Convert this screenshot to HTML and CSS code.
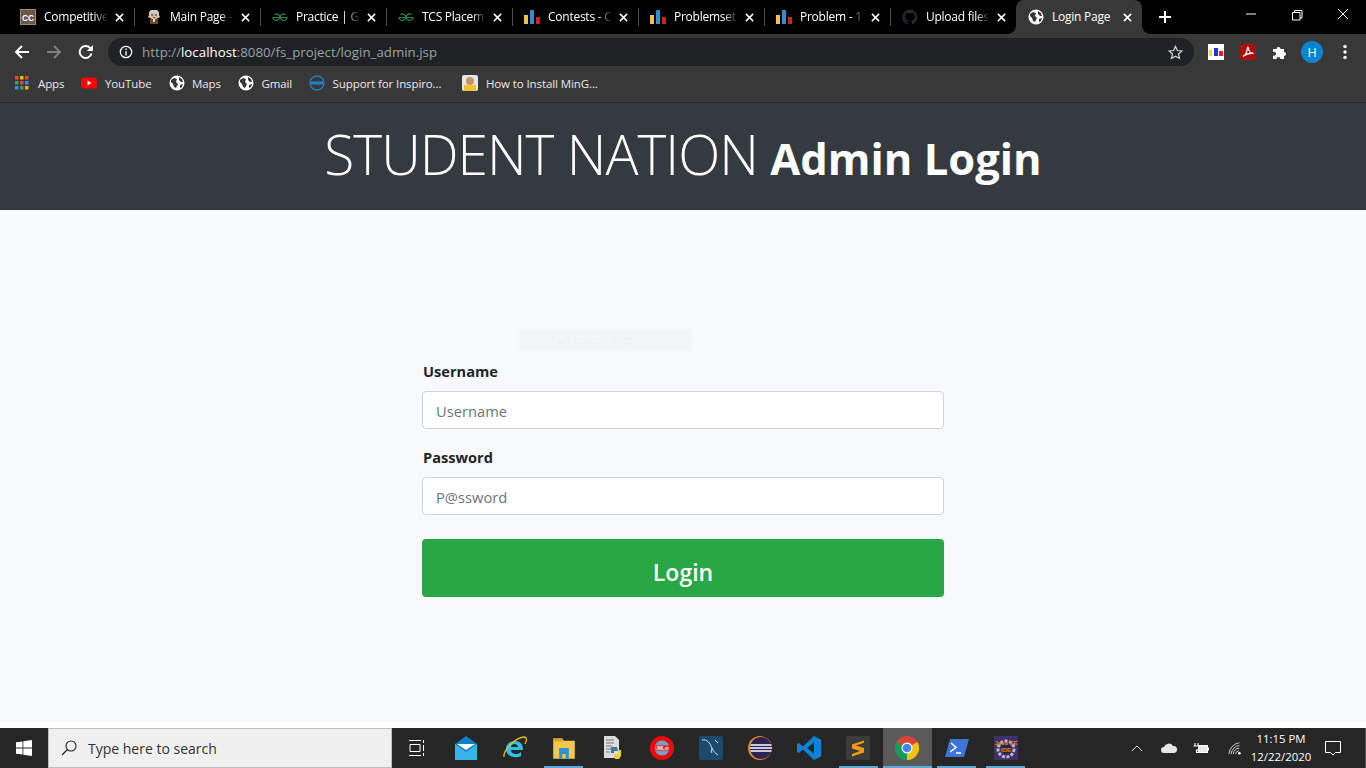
FILE: index.html
```html
<!DOCTYPE html>
<html lang="en">
<head>
<meta charset="utf-8">
<title>Login Page</title>
<link rel="stylesheet" href="styles.css">
</head>
<body>
<svg class="defs" width="0" height="0" aria-hidden="true">
  <defs>
    <symbol id="bars" viewBox="0 0 16 16">
      <rect x="0" y="6" width="4" height="9" fill="#f4c04a"/>
      <rect x="6" y="1" width="4" height="14" fill="#2f8fd0"/>
      <rect x="12" y="8" width="4" height="7" fill="#c8232c"/>
    </symbol>
    <symbol id="gfg" viewBox="0 0 16 16">
      <path d="M8 8.500H15C15 11 12 12 10.500 11C9 10.500 8 9.500 8 8.500C8 6 11 4 13.500 5.500M8 8.500H1C1 11 4 12 5.500 11C7 10.500 8 9.500 8 8.500C8 6 5 4 2.500 5.500" fill="none" stroke="#2a8a45" stroke-width="1.200"/>
    </symbol>
    <symbol id="globe" viewBox="0 0 16 16">
      <circle cx="8" cy="8" r="7.500" fill="#fff"/>
      <path d="M2 5l3-2 3 1-1 3 2 2-2 4-2-1-1-3-2-2zM10 2l3 2 1 3-2 0-2-2zM11 10l3-1-1 3-2 1z" fill="#383838"/>
    </symbol>
    <symbol id="close" viewBox="0 0 10 10">
      <path d="M1 1l8 8M9 1l-8 8" stroke="#fff" stroke-width="1.700" fill="none"/>
    </symbol>
  </defs>
</svg>

<div class="tabstrip">
  <div class="tab sep">
    <svg class="fav" viewBox="0 0 16 16"><rect width="16" height="16" fill="#6b5648"/><rect x=".5" y=".5" width="15" height="15" fill="none" stroke="#9a8a7e"/><text x="8" y="11.500" class="cc">CC</text></svg>
    <span class="tab-title">Competitive</span>
    <svg class="tab-x"><use href="#close"/></svg>
  </div>
  <div class="tab sep">
    <svg class="fav" viewBox="0 0 16 16"><path d="M3 6V3l2-2h6l2 2v3l1 2-2 1H4L2 8z" fill="#c9c9c9"/><rect x="5" y="4" width="6" height="6" fill="#e0b491"/><path d="M5 6h2M9 6h2" stroke="#333"/><rect x="7" y="8" width="2" height="1" fill="#7a4a30"/><rect x="4" y="10" width="8" height="5" fill="#6b4a2c"/><rect x="7" y="10" width="2" height="3" fill="#e9d9b0"/></svg>
    <span class="tab-title">Main Page -</span>
    <svg class="tab-x"><use href="#close"/></svg>
  </div>
  <div class="tab sep">
    <svg class="fav"><use href="#gfg"/></svg>
    <span class="tab-title">Practice | G</span>
    <svg class="tab-x"><use href="#close"/></svg>
  </div>
  <div class="tab sep">
    <svg class="fav"><use href="#gfg"/></svg>
    <span class="tab-title">TCS Placem</span>
    <svg class="tab-x"><use href="#close"/></svg>
  </div>
  <div class="tab sep">
    <svg class="fav"><use href="#bars"/></svg>
    <span class="tab-title">Contests - C</span>
    <svg class="tab-x"><use href="#close"/></svg>
  </div>
  <div class="tab sep">
    <svg class="fav"><use href="#bars"/></svg>
    <span class="tab-title">Problemset</span>
    <svg class="tab-x"><use href="#close"/></svg>
  </div>
  <div class="tab sep">
    <svg class="fav"><use href="#bars"/></svg>
    <span class="tab-title">Problem - 1</span>
    <svg class="tab-x"><use href="#close"/></svg>
  </div>
  <div class="tab">
    <svg class="fav" viewBox="0 0 16 16"><path d="M8 .5a7.700 7.700 0 0 0-2.400 15c.4.1.5-.2.5-.4v-1.400c-2.100.5-2.600-1-2.600-1-.3-.9-.8-1.100-.8-1.100-.7-.5 0-.5 0-.5.800.1 1.200.8 1.200.8.700 1.200 1.800.9 2.200.7.100-.5.300-.9.500-1.100-1.700-.2-3.500-.9-3.500-3.800 0-.8.300-1.500.8-2-.1-.2-.3-1 .1-2 0 0 .6-.2 2.100.8a7 7 0 0 1 3.800 0c1.500-1 2.100-.8 2.100-.8.400 1 .2 1.800.1 2 .5.500.8 1.200.8 2 0 2.900-1.800 3.600-3.500 3.800.3.200.5.700.5 1.400v2.100c0 .2.100.5.500.4A7.700 7.700 0 0 0 8 .5z" fill="#24292e"/></svg>
    <span class="tab-title">Upload files</span>
    <svg class="tab-x"><use href="#close"/></svg>
  </div>
  <div class="tab active">
    <svg class="fav"><use href="#globe"/></svg>
    <span class="tab-title">Login Page</span>
    <svg class="tab-x"><use href="#close"/></svg>
  </div>
  <svg class="newtab" viewBox="0 0 12 12"><path d="M6 0v12M0 6h12" stroke="#fff" stroke-width="2"/></svg>
  <div class="winctl">
    <svg viewBox="0 0 46 32"><path d="M18 14h10" stroke="#fff"/></svg>
    <svg viewBox="0 0 46 32"><path d="M18.500 12.500h7.500v7.500h-7.500zM20.500 12.500v-2h7.500v7.500h-2" stroke="#fff" fill="none"/></svg>
    <svg viewBox="0 0 46 32"><path d="M18 9l10 10M28 9l-10 10" stroke="#fff" fill="none"/></svg>
  </div>
</div>

<div class="toolbar">
  <svg class="nav" viewBox="0 0 16 16"><path d="M15 8H2M8 2L2 8l6 6" stroke="#fff" stroke-width="1.900" fill="none"/></svg>
  <svg class="nav" viewBox="0 0 16 16"><path d="M1 8h13M8 2l6 6-6 6" stroke="#7d7e80" stroke-width="1.900" fill="none"/></svg>
  <svg class="nav" viewBox="0 0 16 16"><path d="M13.500 9.500A6 6 0 1 1 12 3.800L14 6" stroke="#fff" stroke-width="1.900" fill="none"/><path d="M14.800 1v6h-6z" fill="#fff"/></svg>
  <div class="omnibox">
    <svg class="info" viewBox="0 0 16 16"><circle cx="8" cy="8" r="6.500" stroke="#fff" stroke-width="1.400" fill="none"/><path d="M8 7v5M8 4v1.600" stroke="#fff" stroke-width="1.500"/></svg>
    <span class="url">http://<b>localhost</b>:8080/fs_project/login_admin.jsp</span>
    <svg class="star" viewBox="0 0 16 16"><path d="M8 1.500l2 4.400 4.800.5-3.600 3.200 1 4.700L8 11.900l-4.200 2.400 1-4.700L1.200 6.400 6 5.900z" stroke="#d5d6d7" stroke-width="1.300" fill="none"/></svg>
  </div>
  <div class="ext">
    <svg class="ext-icon" viewBox="0 0 16 16"><rect width="16" height="16" fill="#fff"/><rect x="1" y="6" width="3" height="6" fill="#f4e300"/><rect x="6" y="4" width="4" height="8" fill="#2233dd"/><rect x="11" y="7" width="4" height="5" fill="#e8202a"/></svg>
    <svg class="ext-icon" viewBox="0 0 16 16"><rect width="16" height="16" rx="2" fill="#a80f0f"/><path d="M3 12.500c2-1 4-5 4.500-8.500.2-1 1-1 1 .2 0 3 2.500 5 5 5.300M3.500 12c3-2.500 6-3 9.500-2.700" stroke="#fff" stroke-width="1.300" fill="none"/></svg>
    <svg class="ext-icon" viewBox="0 0 16 16"><path d="M1 5h3.500a2 2 0 1 1 4 0H12v3a2 2 0 1 1 0 4v3H8.500a2 2 0 1 0-4 0H1v-3.500a2 2 0 1 0 0-3.500z" fill="#fff"/></svg>
    <span class="avatar">H</span>
    <svg class="menu" viewBox="0 0 4 16"><circle cx="2" cy="2.500" r="1.700" fill="#fff"/><circle cx="2" cy="8" r="1.700" fill="#fff"/><circle cx="2" cy="13.500" r="1.700" fill="#fff"/></svg>
  </div>
</div>

<div class="bookmarks">
  <div class="bm"><svg class="bm-i bm-apps" viewBox="0 0 14 14"><g><rect x="0" y="0" width="3.500" height="3.500" fill="#e8453c"/><rect x="5" y="0" width="3.500" height="3.500" fill="#f4b400"/><rect x="10" y="0" width="3.500" height="3.500" fill="#e8453c"/><rect x="0" y="5" width="3.500" height="3.500" fill="#34a853"/><rect x="5" y="5" width="3.500" height="3.500" fill="#e8453c"/><rect x="10" y="5" width="3.500" height="3.500" fill="#4285f4"/><rect x="0" y="10" width="3.500" height="3.500" fill="#4285f4"/><rect x="5" y="10" width="3.500" height="3.500" fill="#34a853"/><rect x="10" y="10" width="3.500" height="3.500" fill="#f4b400"/></g></svg>Apps</div>
  <div class="bm"><svg class="bm-i" viewBox="0 0 16 16"><rect x="0" y="2.500" width="16" height="11" rx="3" fill="#f00"/><path d="M6.500 5.500l4 2.500-4 2.500z" fill="#fff"/></svg>YouTube</div>
  <div class="bm"><svg class="bm-i"><use href="#globe"/></svg>Maps</div>
  <div class="bm"><svg class="bm-i"><use href="#globe"/></svg>Gmail</div>
  <div class="bm bm-wide"><svg class="bm-i" viewBox="0 0 16 16"><circle cx="8" cy="8" r="7" fill="none" stroke="#1a83c4" stroke-width="1.300"/><rect x="2" y="6.500" width="12" height="3" fill="#1a83c4"/></svg>Support for Inspiro...</div>
  <div class="bm"><svg class="bm-i" viewBox="0 0 16 16"><rect width="16" height="16" rx="2" fill="#dfe8ef"/><circle cx="8" cy="6" r="4" fill="#c8965a"/><rect x="2" y="10" width="12" height="6" fill="#f2c230"/></svg>How to Install MinG...</div>
</div>

<header class="page-head">
  <h1 class="title"><span class="brand">STUDENT NATION</span> <strong>Admin Login</strong></h1>
</header>

<main class="content">
  <div class="ghost">Full-screen Snip</div>
  <form class="login">
    <label class="lbl" for="u">Username</label>
    <input class="field" id="u" type="text" placeholder="Username">
    <label class="lbl" for="p">Password</label>
    <input class="field" id="p" type="password" placeholder="P@ssword">
    <button class="btn" type="button">Login</button>
  </form>
</main>

<div class="gap"></div>

<footer class="taskbar">
  <div class="start"><svg viewBox="0 0 16 16"><path d="M0 2.300l6.500-.9v6.200H0zM7.300 1.300L16 0v7.600H7.300zM0 8.400h6.500v6.200L0 13.700zM7.300 8.400H16V16l-8.700-1.200z" fill="#fff"/></svg></div>
  <div class="search">
    <svg viewBox="0 0 16 16"><circle cx="10" cy="6" r="5" fill="none" stroke="#222" stroke-width="1.100"/><path d="M6.500 9.500L1 15" stroke="#222" stroke-width="1.300"/></svg>
    <span>Type here to search</span>
  </div>
  <div class="tb"><svg class="tb-s" viewBox="0 0 16 16"><path d="M0 .5h12M0 15.500h12M1 4.500h10v7H1zM14.500 0v3M14.500 5v6M14.500 13v3" stroke="#fff" fill="none"/></svg></div>
  <div class="tb"><svg class="tb-i" viewBox="0 0 22 24"><path d="M0 8L11 0l11 8v16H0z" fill="#0f7fc9"/><path d="M0 8l11 8 11-8v16H0z" fill="#35b5ea"/><path d="M2 8h18l-9 6z" fill="#fff"/></svg></div>
  <div class="tb"><svg class="tb-i" viewBox="0 0 24 24"><path d="M3 13c0-5 4-8 9-8s8 3 8 9H8c0 5 8 5 10 2v4c-5 3-15 1-15-7zm5-2h7c0-4-7-4-7 0z" fill="#2dc0ee"/><path d="M1 21C0 15 11 2 21 1c3 0 3 3 1 7" fill="none" stroke="#e9b91c" stroke-width="1.300"/></svg></div>
  <div class="tb on"><svg class="tb-i" viewBox="0 0 20 20"><path d="M1 2h7l2 2h9v15H1z" fill="#f3c64e"/><rect x="1" y="2" width="8" height="2.500" fill="#d8a22c"/><path d="M6 10h8v9h-2.500v-4h-3v4H6z" fill="#2b90d9"/></svg></div>
  <div class="tb"><svg class="tb-i" viewBox="0 0 20 24"><path d="M1 0h11l4 4v18H1z" fill="#dcdcdc"/><path d="M3 4h8M3 7h8M3 10h6M3 13h5M3 16h4" stroke="#777"/><path d="M8 11h6l1 4H11v2H8z" fill="#3b77a8"/><path d="M15 14h3v6l-2 3h-4l-1-3v-2h4z" fill="#f5cf3f"/></svg></div>
  <div class="tb"><svg class="tb-i" viewBox="0 0 24 24"><circle cx="12" cy="12" r="12" fill="#f00607"/><circle cx="12" cy="12" r="7.500" fill="#6da3c8"/><rect x="0" y="9.500" width="24" height="5" fill="#e90b0b"/><text x="12" y="13.500" class="uml">UMLet</text></svg></div>
  <div class="tb"><svg class="tb-i" viewBox="0 0 24 24"><rect width="24" height="24" rx="2" fill="#1b4a6d"/><path d="M3 4c5-1 8 3 10 8 1 3 3 5 6 7M13 12c-1 2-1 4 0 5M16 4l3 3" stroke="#cfe0ea" fill="none"/></svg></div>
  <div class="tb"><svg class="tb-i" viewBox="0 0 24 24"><circle cx="12" cy="12" r="12" fill="#e98a16"/><circle cx="13" cy="12" r="11" fill="#2c2255"/><path d="M2.500 9h21M2 12h22M2.500 15h21" stroke="#fff" stroke-width="1.300"/></svg></div>
  <div class="tb"><svg class="tb-i" viewBox="0 0 24 24"><path d="M17 0l7 3.500v17L17 24 6 13.500 1.800 17 0 16v-8l1.800-1L6 10.500zM17 6.500l-7 5.500 7 5.500z" fill="#0a84d6"/></svg></div>
  <div class="tb on"><svg class="tb-i" viewBox="0 0 24 24"><rect width="24" height="24" rx="2" fill="#3b3b3b"/><path d="M18 4.500L6 8.500v4l8 2.500-8 3v2.500l12-4v-4.500l-8-2.500 8-2.800z" fill="#f29a0c"/></svg></div>
  <div class="tb on act"><svg class="tb-i" viewBox="0 0 24 24"><circle cx="12" cy="12" r="12" fill="#db4437"/><path d="M12 12L22.400 6A12 12 0 0 1 12 24z" fill="#f4c20d"/><path d="M12 12L12 24A12 12 0 0 1 1.600 6z" fill="#0f9d58"/><circle cx="12" cy="12" r="5.500" fill="#fff"/><circle cx="12" cy="12" r="4.300" fill="#4285f4"/></svg></div>
  <div class="tb on"><svg class="tb-i" viewBox="0 0 24 24"><path d="M5 3h19l-5 18H0z" fill="#3d74d8"/><path d="M6 7l5 4.500L5 16M11 17h5" stroke="#fff" stroke-width="1.500" fill="none"/></svg></div>
  <div class="tb on"><svg class="tb-i" viewBox="0 0 24 24"><rect width="24" height="24" fill="#40306a"/><circle cx="12" cy="13" r="8" fill="none" stroke="#bbb" stroke-width="3" stroke-dasharray="3 1.500"/><circle cx="12" cy="13" r="5" fill="#2a2140"/><text x="12" y="9" class="jee">Java EE</text><text x="12" y="16" class="jee">IDE</text></svg></div>
  <div class="tray">
    <svg class="t-up" viewBox="0 0 14 8"><path d="M1 7l6-6 6 6" stroke="#fff" fill="none"/></svg>
    <svg class="t-cloud" viewBox="0 0 16 10"><path d="M3 10a3 3 0 0 1 0-6 5 5 0 0 1 9-1 3.500 3.500 0 0 1 1 7z" fill="#e6e6e6"/></svg>
    <svg class="t-batt" viewBox="0 0 16 11"><path d="M2 0v3M5 0v3M.5 3h6v2c0 1-1 2-3 2v2.500h2" stroke="#fff" stroke-width="1.100" fill="none"/><rect x="5.500" y="2.500" width="9" height="7" fill="#e8e8e8" stroke="#fff"/><rect x="15" y="4.500" width="1" height="3" fill="#fff"/></svg>
    <svg class="t-wifi" viewBox="0 0 16 16"><path d="M1 15A14 14 0 0 1 13 2M3.500 15A11 11 0 0 1 13 5M6 15a8 8 0 0 1 7-7M8.500 15a5 5 0 0 1 4-4" stroke="#ddd" fill="none"/><circle cx="13" cy="14" r="1.500" fill="#fff"/></svg>
    <div class="clock"><span>11:15 PM</span><span>12/22/2020</span></div>
    <svg class="t-note" viewBox="0 0 16 16"><path d="M.5 1.500h15v11h-5L8 15l-2.500-2.500h-5z" stroke="#fff" fill="none"/></svg>
    <div class="t-show"></div>
  </div>
</footer>
</body>
</html>
```
FILE: styles.css
```css
* { box-sizing: border-box; }
html, body { margin: 0; padding: 0; }
body {
  width: 1366px;
  height: 768px;
  overflow: hidden;
  background: #fff;
  font-family: "Open Sans", "Noto Sans", sans-serif;
  display: flex;
  flex-direction: column;
}
.defs { position: absolute; }

/* tab strip */
.tabstrip {
  height: 34px;
  flex: none;
  background: #000;
  display: flex;
  align-items: center;
  padding-left: 8px;
  color: #fff;
  font-size: 12px;
  letter-spacing: -.25px;
}
.tab {
  width: 126px;
  height: 34px;
  flex: none;
  display: flex;
  align-items: center;
  padding-left: 12px;
  position: relative;
}
.tab.sep::after {
  content: "";
  position: absolute;
  right: -1px;
  top: 8px;
  height: 18px;
  width: 1px;
  background: #4c4c4c;
}
.tab.active {
  background: #383838;
  border-radius: 8px 8px 0 0;
}
.tab.active::before,
.tab.active::after {
  content: "";
  position: absolute;
  bottom: 0;
  width: 8px;
  height: 8px;
}
.tab.active::before {
  left: -8px;
  background: radial-gradient(circle at 0 0, #000 7.5px, #383838 8px);
}
.tab.active::after {
  right: -8px;
  background: radial-gradient(circle at 100% 0, #000 7.5px, #383838 8px);
}
.fav { width: 16px; height: 16px; flex: none; }
.cc { font: 700 8.500px "Liberation Sans", sans-serif; fill: #fff; text-anchor: middle; }
.tab-title {
  margin: -1px 0 0 8px;
  width: 64px;
  flex: none;
  white-space: nowrap;
  overflow: hidden;
  -webkit-mask-image: linear-gradient(to right, #000 78%, transparent);
  mask-image: linear-gradient(to right, #000 78%, transparent);
}
.tab.active .tab-title { -webkit-mask-image: none; mask-image: none; }
.tab-x { width: 9px; height: 9px; margin-left: 7px; flex: none; }
.newtab { width: 12px; height: 12px; margin-left: 17px; flex: none; }
.winctl { margin-left: auto; display: flex; height: 32px; align-self: flex-start; }
.winctl svg { width: 46px; height: 32px; display: block; }

/* toolbar */
.toolbar {
  height: 33px;
  flex: none;
  background: #383838;
  display: flex;
  align-items: center;
  padding: 3px 0 0 14px;
}
.nav { width: 16px; height: 16px; margin-right: 16px; flex: none; }
.omnibox {
  width: 1086px;
  height: 28px;
  margin-left: -2px;
  background: #202124;
  border-radius: 14px;
  display: flex;
  align-items: center;
  padding: 0 11px;
  flex: none;
}
.info { width: 14px; height: 14px; flex: none; }
.url { margin-left: 9px; font-size: 13.300px; color: #9aa0a6; white-space: nowrap; }
.url b { color: #fff; font-weight: 400; }
.star { width: 15px; height: 15px; margin-left: auto; flex: none; }
.ext { display: flex; align-items: center; margin-left: 14px; }
.ext-icon { width: 16px; height: 16px; margin-right: 16px; flex: none; }
.avatar {
  width: 22px;
  height: 22px;
  border-radius: 50%;
  background: #0a84d0;
  color: #fff;
  font-size: 12.500px;
  display: flex;
  align-items: center;
  justify-content: center;
  margin-left: -3px;
}
.menu { width: 4px; height: 16px; margin-left: 20px; flex: none; }

/* bookmarks */
.bookmarks {
  height: 36px;
  flex: none;
  background: #383838;
  border-bottom: 1px solid #2b2b2b;
  display: flex;
  align-items: center;
  padding: 0 0 3px 15px;
  color: #e8eaed;
  font-size: 11.500px;
  letter-spacing: -.1px;
}
.bm { display: flex; align-items: center; margin-right: 17px; white-space: nowrap; }
.bm-wide { margin-right: 21px; }
.bm-i { width: 16px; height: 16px; margin-right: 7.500px; flex: none; }
.bm-apps { width: 14px; height: 14px; margin-right: 9px; }

/* page header */
.page-head {
  height: 107px;
  flex: none;
  padding-bottom: 5px;
  background: #343a40;
  color: #fff;
  display: flex;
  align-items: center;
  justify-content: center;
}
.title { margin: 0; font-size: 48px; font-weight: 400; white-space: nowrap; line-height: 1.2; }
.brand { font-weight: 300; font-size: 55px; letter-spacing: -1px; }
.title strong { font-weight: 700; font-size: 43.500px; }

/* content */
.content {
  height: 512px;
  flex: none;
  background: #f8f9fa;
  padding-top: 119px;
  position: relative;
}
.ghost {
  position: absolute;
  left: 519px;
  top: 119px;
  width: 173px;
  height: 22px;
  background: #f3f6f9;
  color: #edf0f3;
  font-size: 11.200px;
  line-height: 22px;
  padding-left: 32px;
}
.login {
  width: 522px;
  margin: 0 auto;
  padding-top: 31px;
  display: flex;
  flex-direction: column;
}
.lbl {
  font-size: 14.600px;
  font-weight: 700;
  color: #212529;
  line-height: 22px;
  margin-bottom: 9px;
  padding-left: 1px;
}
.field {
  height: 38px;
  border: 1px solid #ced4da;
  border-radius: 4px;
  background: #fff;
  padding: 2px 13px 0;
  font: 400 14.700px "Open Sans", "Noto Sans", sans-serif;
  color: #495057;
  margin-bottom: 17px;
}
.field::placeholder { color: #6c757d; opacity: 1; }
.btn {
  height: 58px;
  margin-top: 7px;
  padding: 7px 0 0;
  border: 0;
  border-radius: 4px;
  background: #28a745;
  color: #fff;
  font: 600 23px "Open Sans", "Noto Sans", sans-serif;
}

.gap { height: 6px; flex: none; background: #fff; }

/* taskbar */
.taskbar {
  height: 40px;
  flex: none;
  background: #262626;
  display: flex;
  align-items: stretch;
}
.start { width: 48px; display: flex; align-items: center; justify-content: center; flex: none; }
.start svg { width: 16px; height: 16px; }
.search {
  width: 344px;
  flex: none;
  background: #f0f0f0;
  border: 1px solid #bfbfbf;
  display: flex;
  align-items: center;
  padding-left: 12px;
  font-size: 14px;
  color: #333;
}
.search svg { width: 16px; height: 16px; margin-right: 11px; }
.tb {
  width: 49.100px;
  flex: none;
  display: flex;
  align-items: center;
  justify-content: center;
  position: relative;
}
.tb.on::after {
  content: "";
  position: absolute;
  left: 5px;
  right: 5px;
  bottom: 0;
  height: 2px;
  background: #5ba9d9;
}
.tb.act { background: #5a5a5a; }
.tb.act::after { left: 0; right: 0; }
.tb-i { width: 24px; height: 24px; }
.tb-s { width: 16px; height: 16px; }
.uml { font: 700 4.500px "Liberation Sans", sans-serif; fill: #fff; text-anchor: middle; }
.jee { font: 700 6px "Liberation Sans", sans-serif; fill: #e8811a; text-anchor: middle; }
.tray {
  margin-left: auto;
  display: flex;
  align-items: center;
  color: #fff;
}
.t-up { width: 12px; height: 7px; margin-right: 18px; }
.t-cloud { width: 16px; height: 10px; margin-right: 16px; }
.t-batt { width: 16px; height: 11px; margin-right: 19px; }
.t-wifi { width: 14px; height: 14px; margin-right: 8px; }
.clock {
  width: 62px;
  display: flex;
  flex-direction: column;
  align-items: center;
  font-size: 11.400px;
  line-height: 18px;
}
.t-note { width: 16px; height: 16px; margin: 0 24px 0 13px; }
.t-show { width: 1px; height: 100%; background: #555; }
```
